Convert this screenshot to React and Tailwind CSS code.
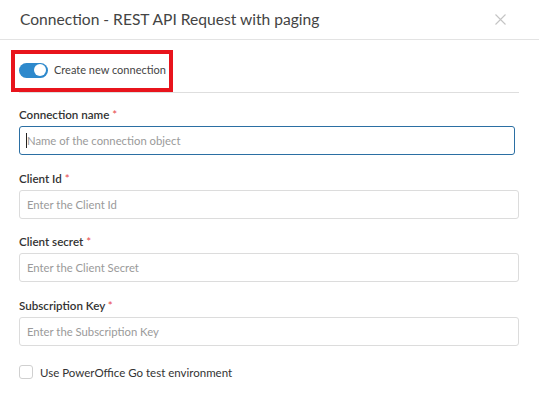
function Field({ label, placeholder, focused }) {
  return (
    <div className="flex flex-col">
      <label className="h-4 text-[11.6px] leading-4 font-semibold text-[#333]">
        {label} <span className="text-[#e8484c] font-normal">*</span>
      </label>
      <div className="relative mt-[3px]">
        <input
          placeholder={placeholder}
          className={`h-[29px] rounded-[3px] border px-[7px] text-[11.3px] outline-none placeholder:text-[#9a9a9a] ${
            focused ? "w-[496px] border-[#2b6fa3]" : "w-full border-[#dcdcdc]"
          }`}
        />
        {focused && <span className="absolute left-[7px] top-[7px] h-[15px] w-px bg-[#222]" />}
      </div>
    </div>
  );
}

export default function App() {
  return (
    <div className="h-[408px] w-[539px] bg-white font-['Segoe_UI','Lato',sans-serif]">
      <div className="flex h-10 items-center justify-between border-b border-[#e3e3e3] pl-5 pr-[33px]">
        <h1 className="text-[15.6px] text-[#444]">Connection - REST API Request with paging</h1>
        <svg width="11" height="11" viewBox="0 0 11 11" className="text-[#c4c4c4]">
          <path d="M0.5 0.5L10.5 10.5M10.5 0.5L0.5 10.5" stroke="currentColor" strokeWidth="1.1" />
        </svg>
      </div>

      <div className="relative pl-[19px] pr-5">
        <div className="flex items-center gap-[6px] border-b border-[#dedede] pt-[22px] pb-[14px]">
          <div className="flex h-[15px] w-[29px] items-center justify-end rounded-full bg-[#2e89cc] pr-[2px]">
            <div className="h-[12px] w-[12px] rounded-full bg-white" />
          </div>
          <span className="text-[11px] leading-4 text-[#444]">Create new connection</span>
        </div>
        <div className="absolute left-[11px] top-[10px] h-[42px] w-[162px] border-4 border-[#e8141c]" />

        <div className="flex flex-col gap-[15.5px] pt-[14px]">
          <Field label="Connection name" placeholder="Name of the connection object" focused />
          <Field label="Client Id" placeholder="Enter the Client Id" />
          <Field label="Client secret" placeholder="Enter the Client Secret" />
          <Field label="Subscription Key" placeholder="Enter the Subscription Key" />
        </div>

        <label className="mt-[18px] flex items-center gap-[7px]">
          <span className="h-[14px] w-[14px] rounded-[3px] border border-[#d0d0d0]" />
          <span className="text-[11.5px] text-[#333]">Use PowerOffice Go test environment</span>
        </label>
      </div>
    </div>
  );
}
